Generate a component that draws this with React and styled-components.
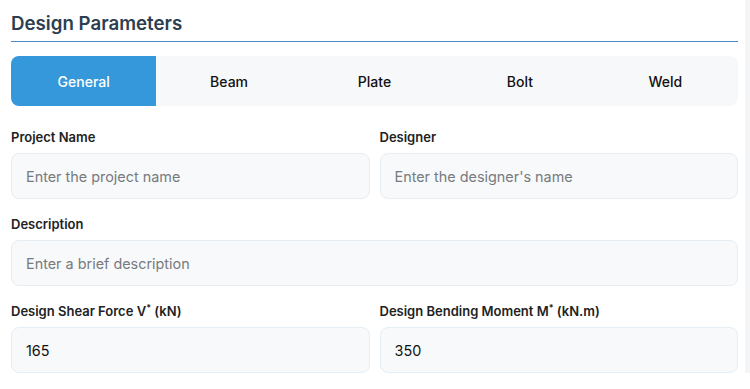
import React, { useState } from 'react';
import styled, { createGlobalStyle } from 'styled-components';

const GlobalStyle = createGlobalStyle`
    html, body {
        margin: 0;
        padding: 0;
        background: #ffffff;
    }
    body {
        font-family: Inter, "Liberation Sans", sans-serif;
        border-right: 5px solid #f4f5f6;
    }
`;

const tabs = ['General', 'Beam', 'Plate', 'Bolt', 'Weld'];

const App = () => {
    const [active, setActive] = useState('General');

    return (
        <>
            <GlobalStyle />
            <Panel>
                <Heading>Design Parameters</Heading>
                <TabBar>
                    {tabs.map((t) => (
                        <Tab key={t} $active={t === active} onClick={() => setActive(t)}>
                            {t}
                        </Tab>
                    ))}
                </TabBar>
                <Form>
                    <Row>
                        <Field>
                            <Label>Project Name</Label>
                            <Input placeholder='Enter the project name' />
                        </Field>
                        <Field>
                            <Label>Designer</Label>
                            <Input placeholder="Enter the designer's name" />
                        </Field>
                    </Row>
                    <Field>
                        <Label>Description</Label>
                        <Input placeholder='Enter a brief description' />
                    </Field>
                    <Row>
                        <Field>
                            <Label>
                                Design Shear Force V<sup>*</sup> (kN)
                            </Label>
                            <Input defaultValue='165' />
                        </Field>
                        <Field>
                            <Label>
                                Design Bending Moment M<sup>*</sup> (kN.m)
                            </Label>
                            <Input defaultValue='350' />
                        </Field>
                    </Row>
                </Form>
            </Panel>
        </>
    );
};

const Panel = styled.div`
    padding: 11px 7px 0 11px;
`;

const Heading = styled.h2`
    margin: 0;
    font-size: 18.7px;
    font-weight: 600;
    color: #2c3e50;
    line-height: 25px;
    padding-bottom: 5px;
    border-bottom: 1px solid #4a89c8;
`;

const TabBar = styled.div`
    display: grid;
    grid-template-columns: repeat(5, 1fr);
    margin-top: 14px;
    height: 50px;
    background: #f7f8fa;
    border-radius: 8px;
    overflow: hidden;
`;

const Tab = styled.button`
    border: none;
    background: ${(p) => (p.$active ? '#3498db' : 'transparent')};
    color: ${(p) => (p.$active ? '#ffffff' : '#111111')};
    font-family: Inter, "Liberation Sans", sans-serif;
    font-size: 14px;
    font-weight: 500;
    cursor: pointer;
`;

const Form = styled.div`
    display: flex;
    flex-direction: column;
    gap: 17px;
    margin-top: 23px;
`;

const Row = styled.div`
    display: grid;
    grid-template-columns: 1fr 1fr;
    gap: 10px;
`;

const Field = styled.div`
    display: flex;
    flex-direction: column;
    gap: 8px;
`;

const Label = styled.label`
    font-size: 13px;
    font-weight: 600;
    color: #222;
    line-height: 16px;

    sup {
        font-size: 9px;
        line-height: 0;
    }
`;

const Input = styled.input`
    box-sizing: border-box;
    height: 46px;
    width: 100%;
    padding: 0 14px;
    border: 1px solid #e5eef4;
    border-radius: 8px;
    background: #f8f9fa;
    font-family: Inter, "Liberation Sans", sans-serif;
    font-size: 14.4px;
    color: #111;
    outline: none;

    &::placeholder {
        color: #777b80;
    }
`;

export default App;
